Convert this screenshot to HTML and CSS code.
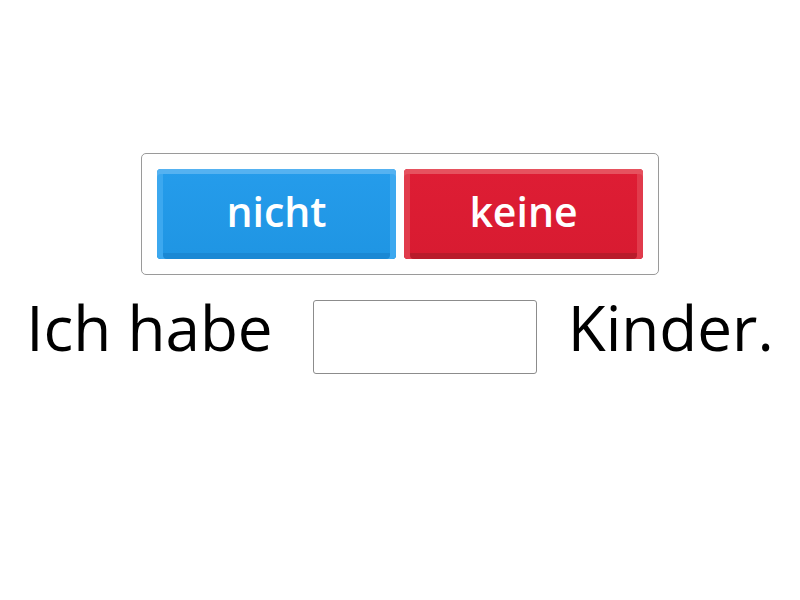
FILE: index.html
```html
<!DOCTYPE html>
<html>
<head>
<meta charset="utf-8">
<link rel="stylesheet" href="styles.css">
</head>
<body>
<div class="stage">
  <div class="choices">
    <div class="btn blue">nicht</div>
    <div class="btn red">keine</div>
  </div>
  <div class="sentence">
    <span class="word">Ich habe</span>
    <span class="blank"></span>
    <span class="word">Kinder.</span>
  </div>
</div>
</body>
</html>
```
FILE: styles.css
```css
html, body {
  margin: 0;
  padding: 0;
  background: #ffffff;
}
body {
  font-family: "Open Sans", Lato, sans-serif;
  width: 800px;
  height: 600px;
}
.stage {
  display: flex;
  flex-direction: column;
  align-items: center;
  padding-top: 153px;
}
.choices {
  display: flex;
  gap: 8px;
  padding: 15px;
  border: 1px solid #9a9a9a;
  border-radius: 5px;
}
.btn {
  width: 239px;
  height: 90px;
  box-sizing: border-box;
  border-radius: 4px;
  display: flex;
  align-items: center;
  justify-content: center;
  color: #ffffff;
  font-size: 41px;
  font-weight: 600;
  padding-bottom: 6px;
}
.blue {
  background: linear-gradient(#259ceb, #1f95e3);
  box-shadow: inset 0 5px 0 #55b2f1, inset 6px 0 0 #3ca8ef, inset -6px 0 0 #3ca8ef, inset 0 -6px 0 #1a88d4;
}
.red {
  background: linear-gradient(#de1d34, #d81b31);
  box-shadow: inset 0 5px 0 #e6525f, inset 6px 0 0 #e13b4c, inset -6px 0 0 #e13b4c, inset 0 -6px 0 #b91b2b;
}
.sentence {
  display: flex;
  align-items: flex-start;
  margin-top: 10px;
  font-size: 62px;
  color: #000000;
}
.blank {
  margin: 15px 31px 0 40px;
  width: 224px;
  height: 74px;
  box-sizing: border-box;
  border: 1px solid #8c8c8c;
  border-radius: 3px;
  background: #ffffff;
}
```
